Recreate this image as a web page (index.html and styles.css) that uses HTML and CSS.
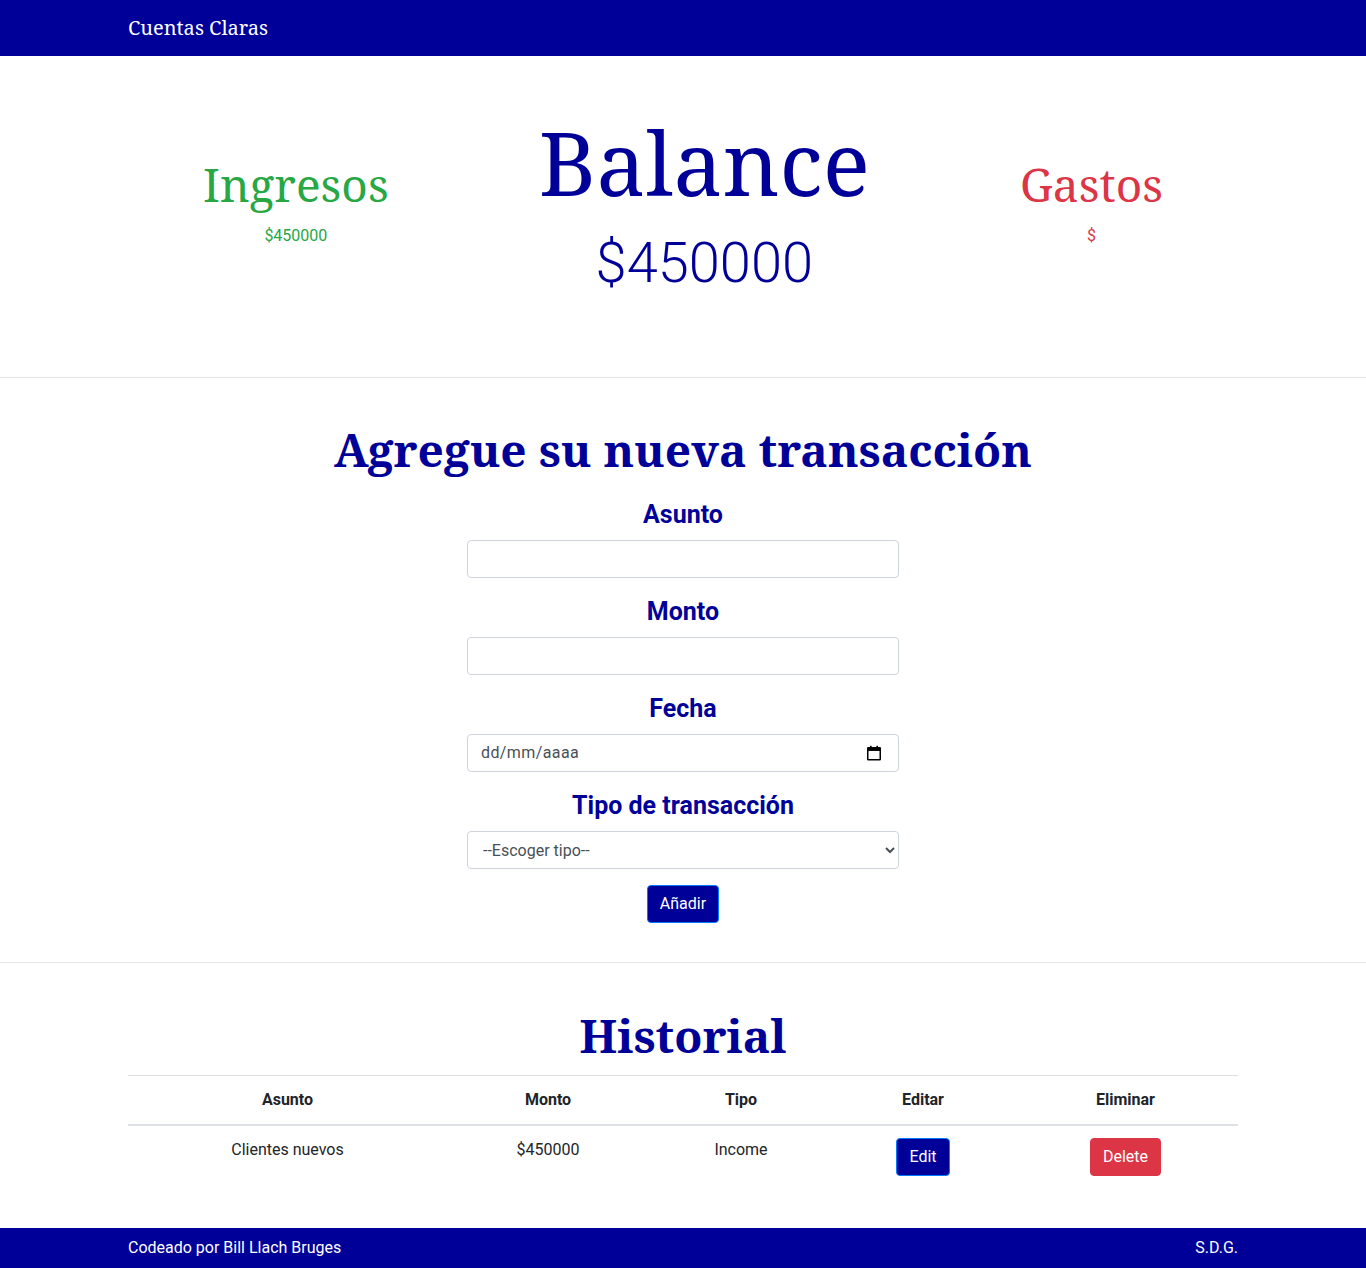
FILE: index.html
```html
<!DOCTYPE html>
<html lang="es">
<head>
<meta charset="utf-8">
<title>Cuentas Claras</title>
<link rel="stylesheet" href="styles.css">
</head>
<body>
<nav class="navbar">
  <div class="container">
    <span class="brand">Cuentas Claras</span>
  </div>
</nav>
<main>
  <section class="summary container">
    <div class="stat income">
      <h2 class="stat-title">Ingresos</h2>
      <p class="stat-value">$450000</p>
    </div>
    <div class="stat balance">
      <h1 class="balance-title">Balance</h1>
      <p class="balance-value">$450000</p>
    </div>
    <div class="stat expense">
      <h2 class="stat-title">Gastos</h2>
      <p class="stat-value">$</p>
    </div>
  </section>
  <hr class="divider">
  <section class="form-section">
    <h2 class="section-title">Agregue su nueva transacción</h2>
    <form class="tx-form">
      <label class="field-label" for="asunto">Asunto</label>
      <input class="form-control" id="asunto" type="text">
      <label class="field-label" for="monto">Monto</label>
      <input class="form-control" id="monto" type="text">
      <label class="field-label" for="fecha">Fecha</label>
      <div class="form-control date-control" id="fecha">
        <span class="date-placeholder">dd/mm/aaaa</span>
        <svg class="cal-icon" width="16" height="16" viewBox="0 0 16 16" aria-hidden="true">
          <rect x="1.75" y="2.75" width="12.5" height="12" fill="none" stroke="#000" stroke-width="1.5" rx="0.5"/>
          <rect x="1.75" y="2.75" width="12.5" height="3.2" fill="#000"/>
          <rect x="4" y="0.8" width="1.6" height="2.5" fill="#000"/>
          <rect x="10.4" y="0.8" width="1.6" height="2.5" fill="#000"/>
        </svg>
      </div>
      <label class="field-label" for="tipo">Tipo de transacción</label>
      <select class="form-control select-control" id="tipo">
        <option>--Escoger tipo--</option>
        <option>Income</option>
        <option>Expense</option>
      </select>
      <button type="button" class="btn btn-primary add-btn">Añadir</button>
    </form>
  </section>
  <hr class="divider">
  <section class="history">
    <h2 class="section-title">Historial</h2>
    <div class="container">
      <table class="tx-table">
        <colgroup>
          <col class="c-asunto"><col class="c-monto"><col class="c-tipo"><col class="c-edit"><col class="c-del">
        </colgroup>
        <thead>
          <tr><th>Asunto</th><th>Monto</th><th>Tipo</th><th>Editar</th><th>Eliminar</th></tr>
        </thead>
        <tbody>
          <tr>
            <td>Clientes nuevos</td>
            <td>$450000</td>
            <td>Income</td>
            <td><button type="button" class="btn btn-primary">Edit</button></td>
            <td><button type="button" class="btn btn-danger">Delete</button></td>
          </tr>
        </tbody>
      </table>
    </div>
  </section>
</main>
<footer class="footer">
  <div class="container footer-inner">
    <span>Codeado por Bill Llach Bruges</span>
    <span>S.D.G.</span>
  </div>
</footer>
</body>
</html>
```
FILE: styles.css
```css
* { box-sizing: border-box; }

body {
  margin: 0;
  font-family: Roboto, "Noto Sans", "Liberation Sans", sans-serif;
  font-size: 16px;
  line-height: 1.5;
  color: #212529;
  background: #fff;
}

.container {
  width: 1110px;
  margin: 0 auto;
}

.navbar {
  background: #000099;
  height: 56px;
  display: flex;
  align-items: center;
}

.brand {
  font-family: "Noto Serif", "DejaVu Serif", serif;
  font-size: 20px;
  color: #fff;
  line-height: 1.5;
}

/* summary */
.summary {
  display: flex;
  justify-content: space-around;
  align-items: center;
  padding: 54px 0 64px;
}

.stat { text-align: center; }

.stat-title {
  font-family: "Noto Serif", "DejaVu Serif", serif;
  font-weight: 400;
  font-size: 46px;
  line-height: 1.2;
  margin: 0 0 12px;
}

.stat-value {
  margin: 0 0 18px;
  font-size: 16px;
}

.income { color: #28a745; }
.expense { color: #dc3545; }
.balance { color: #000099; }

.balance-title {
  font-family: "Noto Serif", "DejaVu Serif", serif;
  font-weight: 400;
  font-size: 88px;
  line-height: 1.2;
  margin: 0 0 14px;
}

.balance-value {
  font-size: 56px;
  font-weight: 300;
  line-height: 1.2;
  margin: 0 0 16px;
}

.divider {
  margin: 0;
  border: 0;
  border-top: 1px solid rgba(0, 0, 0, 0.1);
}

/* form */
.form-section {
  padding: 44.5px 0 39px;
  text-align: center;
}

.section-title {
  font-family: "Noto Serif", "DejaVu Serif", serif;
  font-weight: 700;
  font-size: 46px;
  line-height: 1.2;
  color: #000099;
  margin: 0 0 20px;
}

.tx-form {
  width: 432px;
  margin: 0 auto;
  display: flex;
  flex-direction: column;
  align-items: center;
}

.field-label {
  display: block;
  font-size: 25px;
  font-weight: 700;
  line-height: 35px;
  height: 35px;
  color: #000099;
  margin-bottom: 8px;
}

.form-control {
  width: 100%;
  height: 38px;
  padding: 6px 12px;
  font-family: Roboto, "Noto Sans", sans-serif;
  font-size: 16px;
  line-height: 1.5;
  color: #495057;
  background: #fff;
  border: 1px solid #ced4da;
  border-radius: 4px;
  margin: 0 0 16px;
  text-align: left;
}

.date-control {
  display: flex;
  align-items: center;
  justify-content: space-between;
  padding-left: 13px;
  padding-right: 16px;
}

.date-placeholder {
  color: #495057;
  letter-spacing: 0.4px;
}

.cal-icon { display: block; }

.select-control {
  padding: 6px 8px 6px 11px;
}

.btn {
  display: inline-block;
  font-family: Roboto, "Noto Sans", sans-serif;
  font-size: 16px;
  line-height: 1.5;
  padding: 6px 12px;
  border: 1px solid transparent;
  border-radius: 4px;
  color: #fff;
  cursor: pointer;
}

.btn-primary {
  background: #000099;
  border-color: #007bff;
}

.btn-danger {
  background: #dc3545;
  border-color: #dc3545;
}

.add-btn { margin: 0; }

/* history */
.history {
  padding: 44.5px 0 40px;
}

.history .section-title {
  text-align: center;
  margin-bottom: 12px;
}

.tx-table {
  width: 100%;
  border-collapse: collapse;
  color: #212529;
}

.c-asunto { width: 319px; }
.c-monto { width: 202px; }
.c-tipo { width: 184px; }
.c-edit { width: 180px; }
.c-del { width: 225px; }

.tx-table th,
.tx-table td {
  padding: 12px;
  text-align: center;
  vertical-align: top;
  border-top: 1px solid #dee2e6;
}

.tx-table thead th {
  font-weight: 700;
  border-bottom: 2px solid #dee2e6;
}

/* footer */
.footer {
  background: #000099;
  color: #fff;
  height: 40px;
  display: flex;
  align-items: center;
}

.footer-inner {
  display: flex;
  justify-content: space-between;
}
```
